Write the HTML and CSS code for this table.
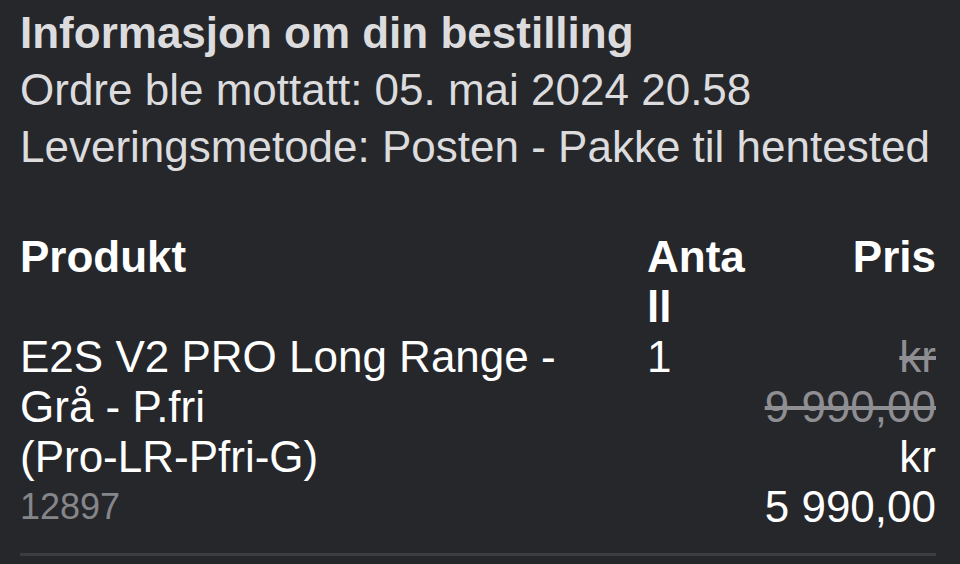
FILE: index.html
```html
<!DOCTYPE html>
<html lang="no">
  <head>
    <meta charset="UTF-8" />
    <meta name="viewport" content="width=device-width, initial-scale=1.0" />
    <title>Ordrebekreftelse</title>
    <link rel="stylesheet" href="styles.css">
  </head>
  <body>
    <div class="order">
      <div class="info">
        <h2>Informasjon om din bestilling</h2>
        <p>Ordre ble mottatt: 05. mai 2024 20.58</p>
        <p>Leveringsmetode: Posten - Pakke til hentested</p>
      </div>

      <div class="lines">
        <div class="cell head product">Produkt</div>
        <div class="cell head qty">Antall</div>
        <div class="cell head price">Pris</div>

        <div class="cell product">
          <div>E2S V2 PRO Long Range - Grå - P.fri</div>
          <div>(Pro-LR-Pfri-G)</div>
          <div class="sku">12897</div>
        </div>
        <div class="cell qty">1</div>
        <div class="cell price">
          <div class="old">kr 9&nbsp;990,00</div>
          <div>kr 5&nbsp;990,00</div>
        </div>
      </div>
    </div>
  </body>
</html>
```

FILE: styles.css
```css
body {
  margin: 0;
  background: #26272b;
  font-family: "Liberation Sans", Arial, sans-serif;
  font-size: 44px;
}
.order {
  padding: 4px 24px 0 20px;
}
.info {
  color: #dcdcde;
  line-height: 57px;
}
.info h2,
.info p {
  margin: 0;
  font-size: 44px;
}
.info h2 {
  font-weight: bold;
}
.lines {
  margin-top: 57px;
  display: grid;
  grid-template-columns: minmax(0, 1fr) 104px 185px;
  color: #fff;
  line-height: 50px;
  padding-bottom: 21px;
  border-bottom: 3px solid #3c3d41;
}
.cell {
  overflow-wrap: anywhere;
}
.head {
  font-weight: bold;
}
.product {
  padding-right: 30px;
}
.price {
  text-align: right;
}
.old {
  color: #8e8e93;
  text-decoration: line-through;
}
.sku {
  color: #85868a;
  font-size: 36px;
}
```
